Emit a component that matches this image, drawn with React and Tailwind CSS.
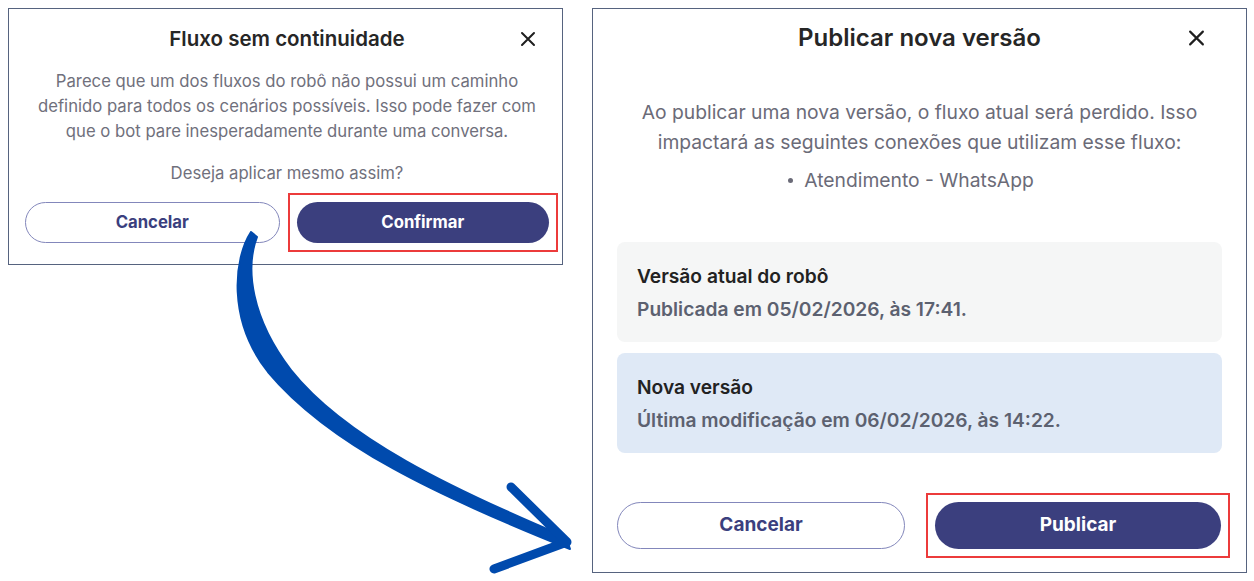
import React from "react";

const FONT = { fontFamily: "Inter, 'Noto Sans', sans-serif" };

function CloseIcon({ size = 16 }) {
  return (
    <svg width={size} height={size} viewBox="0 0 16 16" fill="none">
      <path d="M2 2L14 14M14 2L2 14" stroke="#1f1f1f" strokeWidth="2" strokeLinecap="round" />
    </svg>
  );
}

function Highlight({ children, className }) {
  return (
    <div className={`relative ${className}`}>
      {children}
      <span className="pointer-events-none absolute -inset-[9px] border-2 border-[#ec3b3b]" />
    </div>
  );
}

function Arrow() {
  return (
    <svg className="pointer-events-none absolute inset-0" width="1254" height="581" viewBox="0 0 1254 581">
      <path
        d="M251 232 C 234 258, 227 320, 268 372 C 330 446, 440 497, 570 549 L 566 537 C 452 489, 345 438, 291 370 C 251 318, 245 268, 257 237 Z"
        fill="#004aad"
        stroke="#004aad"
        strokeWidth="2"
        strokeLinejoin="round"
      />
      <path
        d="M511 487 L 567 542 L 494 569"
        fill="none"
        stroke="#004aad"
        strokeWidth="9"
        strokeLinecap="round"
        strokeLinejoin="round"
      />
    </svg>
  );
}

export default function App() {
  return (
    <div className="relative h-[581px] w-[1254px] bg-white" style={FONT}>
      <div className="flex items-start pl-2 pt-2">
        {/* ── Fluxo sem continuidade ── */}
        <div className="w-[555px] border border-[#56637f] bg-white pb-[21px] pl-4 pr-[13px] pt-4">
          <div className="relative flex h-7 items-center justify-center">
            <h2 className="text-[20.5px] font-semibold text-[#262626]">Fluxo sem continuidade</h2>
            <span className="absolute right-[13px] top-1/2 -translate-y-1/2">
              <CloseIcon size={16} />
            </span>
          </div>
          <p className="mt-4 px-2 text-center text-[16.7px] leading-[25px] text-[#70707c]">
            Parece que um dos fluxos do robô não possui um caminho definido para todos os cenários possíveis. Isso pode fazer com que o bot pare inesperadamente durante uma conversa.
          </p>
          <p className="mt-[17px] text-center text-[16.7px] leading-[25px] text-[#70707c]">
            Deseja aplicar mesmo assim?
          </p>
          <div className="mt-4 flex gap-[17px]">
            <button className="h-[41px] flex-1 rounded-full border border-[#8387bb] bg-white text-[16.7px] font-bold text-[#3b3f7e]">
              Cancelar
            </button>
            <Highlight className="flex-1">
              <button className="h-[41px] w-full rounded-full bg-[#3b3f7e] text-[16.7px] font-bold text-white">
                Confirmar
              </button>
            </Highlight>
          </div>
        </div>

        {/* ── Publicar nova versão ── */}
        <div className="ml-[29px] flex h-[565px] w-[655px] flex-col border border-[#56637f] bg-white px-6 pt-[13px]">
          <div className="relative flex h-8 items-center justify-center">
            <h2 className="text-[24px] font-semibold text-[#262626]">Publicar nova versão</h2>
            <span className="absolute right-[17px] top-1/2 -translate-y-1/2">
              <CloseIcon size={17} />
            </span>
          </div>
          <p className="mt-[43px] px-2 text-center text-[19.3px] leading-[30px] text-[#6b6b78]">
            Ao publicar uma nova versão, o fluxo atual será perdido. Isso impactará as seguintes conexões que utilizam esse fluxo:
          </p>
          <ul className="mt-2 flex justify-center pr-[17px] text-[19.3px] leading-[30px] text-[#6b6b78]">
            <li className="flex items-center gap-[11px]">
              <span className="h-[5px] w-[5px] rounded-full bg-[#6b6b78]" />
              Atendimento - WhatsApp
            </li>
          </ul>
          <div className="mt-[47px] flex flex-col gap-[11px]">
            <div className="h-[100px] rounded-lg bg-[#f5f6f6] px-5 pt-[21px]">
              <div className="text-[19.2px] font-semibold leading-[26px] text-[#222]">Versão atual do robô</div>
              <div className="mt-[7px] text-[19.2px] font-semibold leading-[26px] text-[#5c6170]">
                Publicada em 05/02/2026, às 17:41.
              </div>
            </div>
            <div className="h-[100px] rounded-lg bg-[#dfe9f6] px-5 pt-[21px]">
              <div className="text-[19.2px] font-semibold leading-[26px] text-[#222]">Nova versão</div>
              <div className="mt-[7px] text-[19.2px] font-semibold leading-[26px] text-[#5c6170]">
                Última modificação em 06/02/2026, às 14:22.
              </div>
            </div>
          </div>
          <div className="mt-[49px] flex gap-[30px] pr-px">
            <button className="h-[47px] flex-1 rounded-full border border-[#8387bb] bg-white text-[19px] font-bold text-[#3b3f7e]">
              Cancelar
            </button>
            <Highlight className="flex-1">
              <button className="h-[47px] w-full rounded-full bg-[#3b3f7e] text-[19px] font-bold text-white">
                Publicar
              </button>
            </Highlight>
          </div>
        </div>
      </div>
      <Arrow />
    </div>
  );
}
